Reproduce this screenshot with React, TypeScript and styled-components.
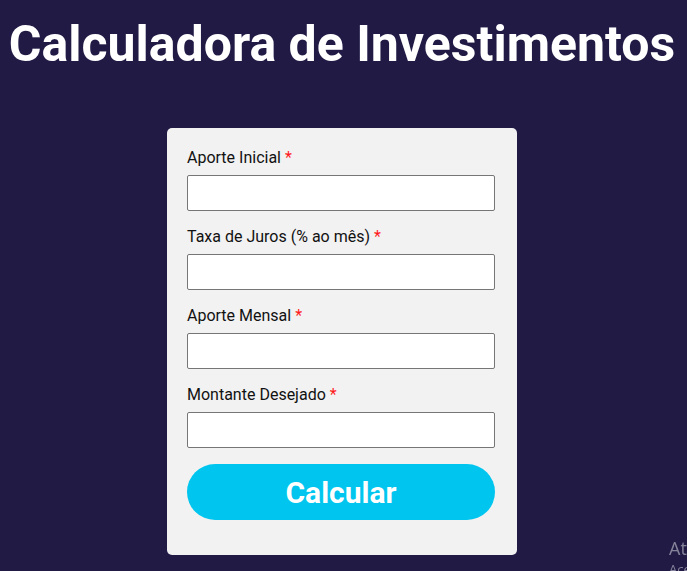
import styled, { createGlobalStyle } from "styled-components";

const fields = [
  "Aporte Inicial",
  "Taxa de Juros (% ao mês)",
  "Aporte Mensal",
  "Montante Desejado",
];

export default function App() {
  return (
    <>
      <GlobalStyle />
      <Page>
        <Title>Calculadora de Investimentos</Title>
        <Card>
          {fields.map((label) => (
            <Field key={label}>
              <Label>
                {label} <Required>*</Required>
              </Label>
              <Input type="text" />
            </Field>
          ))}
          <Button>Calcular</Button>
        </Card>
      </Page>
      <Watermark>
        <span>Ativar o Windows</span>
        <small>Acesse Configurações para ativar o Windows.</small>
      </Watermark>
    </>
  );
}

const GlobalStyle = createGlobalStyle`
  html, body {
    margin: 0;
    background: #201a45;
    font-family: Roboto, "Liberation Sans", sans-serif;
    overflow: hidden;
  }
`;

const Page = styled.main`
  display: flex;
  flex-direction: column;
  align-items: center;
  min-height: 100vh;
  padding-right: 3px;
`;

const Title = styled.h1`
  margin: 14px 0 0;
  color: #ffffff;
  font-size: 50px;
  font-weight: 700;
  line-height: 60px;
  white-space: nowrap;
`;

const Card = styled.form`
  box-sizing: border-box;
  width: 350px;
  margin-top: 54px;
  padding: 19px 22px 35px 20px;
  background: #f2f2f2;
  border-radius: 5px;
  display: flex;
  flex-direction: column;
`;

const Field = styled.div`
  display: flex;
  flex-direction: column;
  margin-bottom: 15px;
`;

const Label = styled.label`
  color: #111111;
  font-size: 16px;
  line-height: 22px;
  margin-bottom: 6px;
`;

const Required = styled.span`
  color: #ff1a1a;
`;

const Input = styled.input`
  box-sizing: border-box;
  height: 36px;
  width: 100%;
  border: 1px solid #767676;
  border-radius: 2px;
  background: #ffffff;
  font: inherit;
  padding: 0 8px;
`;

const Button = styled.button`
  height: 56px;
  margin-top: 1px;
  border: none;
  border-radius: 28px;
  background: #00c6ef;
  color: #ffffff;
  font-family: Roboto, "Liberation Sans", sans-serif;
  font-size: 30px;
  font-weight: 700;
  cursor: pointer;
`;

const Watermark = styled.div`
  position: fixed;
  left: 669px;
  top: 536px;
  display: flex;
  flex-direction: column;
  color: rgba(200, 200, 210, 0.6);
  font-family: "Segoe UI", "Open Sans", sans-serif;
  white-space: nowrap;

  span {
    font-size: 18px;
    line-height: 24px;
  }

  small {
    font-size: 13px;
    line-height: 18px;
  }
`;
